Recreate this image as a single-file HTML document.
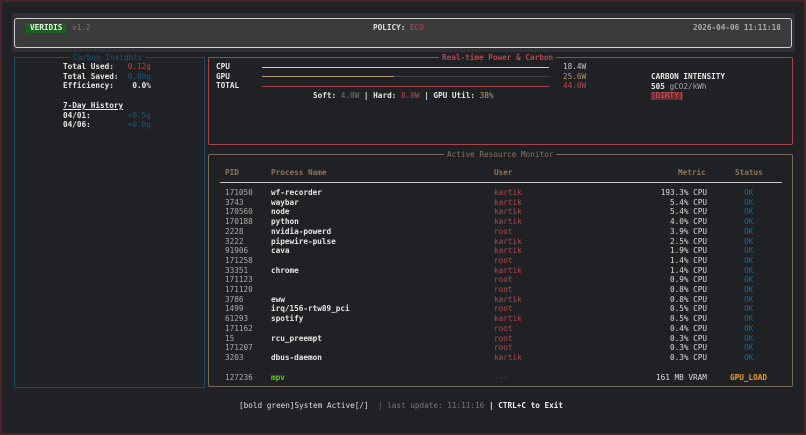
<!DOCTYPE html>
<html><head><meta charset="utf-8"><style>
*{margin:0;padding:0;box-sizing:border-box}
body{width:806px;height:435px;background:#1f2124;overflow:hidden;position:relative;font-family:"DejaVu Sans Mono","Liberation Mono",monospace;font-size:7.7px;color:#c8c8c8}
.a{position:absolute;white-space:pre;line-height:9.7px}
.b{font-weight:bold;color:#e6e6e6}
.box{position:absolute;border:1px solid}
.t{position:absolute;background:#1f2124;padding:0 3px;line-height:9px;white-space:pre}
.r{color:#b5484f}.bl{color:#1c5a7a}.br{color:#8d7560}.dim{color:#777}
</style></head><body>
<div style="position:absolute;left:0;top:0;width:806px;height:435px;border:2px solid #4a2227;border-top-width:2px"></div>
<div style="position:absolute;left:12px;top:13px;width:783px;height:39px;background:#2e3033"></div>
<div style="position:absolute;left:14px;top:18px;width:778px;height:30px;background:#3b3b3c;border:1px solid #d0d0d0;border-radius:3px"></div>
<div class="a" style="left:26px;top:23px;background:#1d5e22;color:#e8f0e8;font-weight:bold;padding:0 4px;line-height:10px">VERIDIS</div>
<div class="a dim" style="left:72px;top:23px">v1.2</div>
<div class="a" style="left:373px;top:23px;color:#e0e0e0;font-weight:bold">POLICY: <span class="r" style="font-weight:normal">ECO</span></div>
<div class="a dim" style="left:693px;top:23px;color:#aaa;font-weight:bold">2026-04-06 11:11:18</div>

<div class="box" style="left:14px;top:57px;width:191px;height:331px;border-color:#1b4b66"></div>
<div class="t bl" style="left:70px;top:53px">Carbon Insights</div>
<div class="a b" style="left:63px;top:62px">Total Used:   <span class="r" style="font-weight:normal">0.12g</span>
Total Saved:  <span class="bl" style="font-weight:normal">0.00g</span>
Efficiency:    0.0%

<u>7-Day History</u>
04/01:        <span class="bl" style="font-weight:normal">+0.5g</span>
04/06:        <span class="bl" style="font-weight:normal">+0.0g</span></div>

<div class="box" style="left:208px;top:57px;width:585px;height:88px;border-color:#a8434b;border-radius:2px"></div>
<div class="t r" style="left:439px;top:53px;font-weight:bold">Real-time Power &amp; Carbon</div>
<div class="a b" style="left:216px;top:62px">CPU
GPU
TOTAL</div>
<div style="position:absolute;left:262px;top:67px;width:287px;height:1px;background:#c8c8c8"></div>
<div style="position:absolute;left:262px;top:76px;width:132px;height:1px;background:#b59a78"></div>
<div style="position:absolute;left:394px;top:76px;width:155px;height:1px;background:#444"></div>
<div style="position:absolute;left:262px;top:86px;width:287px;height:1px;background:#a8434b"></div>
<div class="a" style="left:563px;top:62px">18.4W
<span style="color:#b59a78">25.6W</span>
<span class="r">44.0W</span></div>
<div class="a b" style="left:313px;top:91px">Soft: <span class="dim" style="font-weight:normal">4.0W</span> | Hard: <span class="r" style="font-weight:normal">8.0W</span> | GPU Util: <span style="color:#b59a78;font-weight:normal">38%</span></div>
<div class="a b" style="left:651px;top:72px">CARBON INTENSITY
505 <span style="font-weight:normal;color:#aaa">gCO2/kWh</span></div>
<div class="a" style="left:651px;top:92px;background:#6e2830;color:#c85a62;line-height:8px">[DIRTY]</div>

<div class="box" style="left:208px;top:154px;width:585px;height:233px;border-color:#7a6a5e;border-radius:2px"></div>
<div class="t br" style="left:444px;top:150px">Active Resource Monitor</div>
<div class="a b" style="left:225px;top:168px;color:#8d7560">PID</div>
<div class="a b" style="left:271px;top:168px;color:#8d7560">Process Name</div>
<div class="a b" style="left:494px;top:168px;color:#8d7560">User</div>
<div class="a b" style="left:678px;top:168px;color:#8d7560">Metric</div>
<div class="a b" style="left:735px;top:168px;color:#8d7560">Status</div>
<div style="position:absolute;left:220px;top:182px;width:562px;height:1px;background:#c8c8c8"></div>
<div class="a" style="left:225px;top:188px;color:#aaa">171050
3743
170560
170188
2228
3222
91906
171258
33351
171123
171120
3786
1499
61293
171162
15
171207
3203</div>
<div class="a b" style="left:271px;top:188px">wf-recorder
waybar
node
python
nvidia-powerd
pipewire-pulse
cava

chrome


eww
irq/156-rtw89_pci
spotify

rcu_preempt

dbus-daemon</div>
<div class="a r" style="left:494px;top:188px">kartik
kartik
kartik
kartik
root
kartik
kartik
root
kartik
root
root
kartik
root
kartik
root
root
root
kartik</div>
<div class="a" style="left:630px;top:188px;width:77px;text-align:right;color:#ddd">193.3% CPU
5.4% CPU
5.4% CPU
4.0% CPU
3.9% CPU
2.5% CPU
1.9% CPU
1.4% CPU
1.4% CPU
0.9% CPU
0.8% CPU
0.8% CPU
0.5% CPU
0.5% CPU
0.4% CPU
0.3% CPU
0.3% CPU
0.3% CPU</div>
<div class="a bl" style="left:744px;top:188px;color:#1f6a90">OK
OK
OK
OK
OK
OK
OK
OK
OK
OK
OK
OK
OK
OK
OK
OK
OK
OK</div>
<div class="a" style="left:225px;top:373px;color:#aaa">127236</div>
<div class="a b" style="left:271px;top:373px;color:#6cc024">mpv</div>
<div class="a r" style="left:494px;top:373px;color:#6a3a3e">---</div>
<div class="a" style="left:656px;top:373px;color:#ddd">161 MB VRAM</div>
<div class="a b" style="left:730px;top:373px;color:#e8a020">GPU_LOAD</div>

<div class="a" style="left:239px;top:401px;color:#ddd">[bold green]System Active[/]  <span class="dim">| last update: 11:11:16</span> <b style="color:#eee">| CTRL+C to Exit</b></div>
</body></html>
